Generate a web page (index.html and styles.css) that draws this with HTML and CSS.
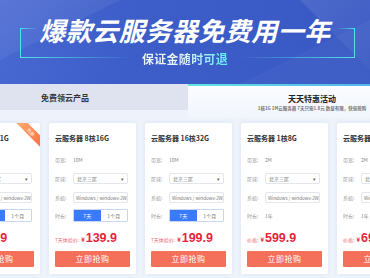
FILE: index.html
```html
<!DOCTYPE html>
<html lang="zh-CN">
<head>
<meta charset="utf-8">
<title>爆款云服务器免费用一年</title>
<link rel="stylesheet" href="styles.css">
</head>
<body>
<header class="banner">
  <svg class="deco" width="370" height="84" viewBox="0 0 370 84" aria-hidden="true">
    <defs>
      <linearGradient id="lf" x1="0" x2="1" y1="0" y2="0">
        <stop offset="0" stop-color="#4fe3ea"/>
        <stop offset="1" stop-color="#4fe3ea" stop-opacity="0"/>
      </linearGradient>
      <linearGradient id="rf" x1="1" x2="0" y1="0" y2="0">
        <stop offset="0" stop-color="#4fe3ea"/>
        <stop offset="1" stop-color="#4fe3ea" stop-opacity="0"/>
      </linearGradient>
      <linearGradient id="sh" x1="0" x2="1" y1="0" y2="1">
        <stop offset="0" stop-color="#ffffff" stop-opacity="0.10"/>
        <stop offset="1" stop-color="#ffffff" stop-opacity="0.02"/>
      </linearGradient>
    </defs>
    <polygon points="0,0 120,0 0,60" fill="url(#sh)"/>
    <polygon points="300,0 370,0 370,70" fill="url(#sh)"/>
    <polygon points="240,84 370,20 370,84" fill="#ffffff" fill-opacity="0.04"/>
    <rect x="20" y="28" width="18" height="1" fill="url(#lf)"/>
    <rect x="20" y="28" width="1" height="30" fill="#4fe3ea"/>
    <rect x="20" y="57" width="114" height="1" fill="url(#lf)"/>
    <rect x="337" y="28" width="18" height="1" fill="url(#rf)"/>
    <rect x="354" y="28" width="1" height="30" fill="#4fe3ea"/>
    <rect x="240" y="57" width="115" height="1" fill="url(#rf)"/>
  </svg>
  <h1 class="title">爆款云服务器免费用一年</h1>
  <p class="sub">保证金随时可退</p>
</header>

<main class="wrap">
  <nav class="tabs">
    <div class="tab">免费领云产品</div>
    <div class="tab active">
      <div class="tab-title">天天特惠活动</div>
      <div class="tab-note">1核1G 1M云服务器 7天只需1.8元 数量有限，快需抢购</div>
    </div>
  </nav>

  <section class="cards">
    <article class="card">
      <span class="ribbon">热卖</span>
      <h2 class="card-title">云服务器 1核1G</h2>
      <div class="row first"><span class="lbl">带宽:</span><span class="val">1M</span></div>
      <div class="row"><span class="lbl">区域:</span><span class="box sel">北京三区<i class="arr">▾</i></span></div>
      <div class="row sys"><span class="lbl">系统:</span><span class="box">Windows / windows-2W</span></div>
      <div class="row dur"><span class="lbl">时长:</span><span class="seg"><span class="on">7天</span><span>1个月</span></span></div>
      <div class="price"><span class="plbl">7天体验价:</span><span class="yen">¥</span><span class="amt">1.9</span></div>
      <button class="buy">立即抢购</button>
    </article>

    <article class="card">
      <h2 class="card-title">云服务器 8核16G</h2>
      <div class="row first"><span class="lbl">带宽:</span><span class="val">10M</span></div>
      <div class="row"><span class="lbl">区域:</span><span class="box sel">北京三区<i class="arr">▾</i></span></div>
      <div class="row sys"><span class="lbl">系统:</span><span class="box">Windows / windows-2W</span></div>
      <div class="row dur"><span class="lbl">时长:</span><span class="seg"><span class="on">7天</span><span>1个月</span></span></div>
      <div class="price"><span class="plbl">7天体验价:</span><span class="yen">¥</span><span class="amt">139.9</span></div>
      <button class="buy">立即抢购</button>
    </article>

    <article class="card">
      <h2 class="card-title">云服务器 16核32G</h2>
      <div class="row first"><span class="lbl">带宽:</span><span class="val">10M</span></div>
      <div class="row"><span class="lbl">区域:</span><span class="box sel">北京三区<i class="arr">▾</i></span></div>
      <div class="row sys"><span class="lbl">系统:</span><span class="box">Windows / windows-2W</span></div>
      <div class="row dur"><span class="lbl">时长:</span><span class="seg"><span class="on">7天</span><span>1个月</span></span></div>
      <div class="price"><span class="plbl">7天体验价:</span><span class="yen">¥</span><span class="amt">199.9</span></div>
      <button class="buy">立即抢购</button>
    </article>

    <article class="card">
      <h2 class="card-title">云服务器 1核8G</h2>
      <div class="row first"><span class="lbl">带宽:</span><span class="val">2M</span></div>
      <div class="row"><span class="lbl">区域:</span><span class="box sel">北京三区<i class="arr">▾</i></span></div>
      <div class="row sys"><span class="lbl">系统:</span><span class="box">Windows / windows-2W</span></div>
      <div class="row dur"><span class="lbl">时长:</span><span class="val">1年</span></div>
      <div class="price"><span class="plbl">价格:</span><span class="yen">¥</span><span class="amt">599.9</span></div>
      <button class="buy">立即抢购</button>
    </article>

    <article class="card">
      <h2 class="card-title">云服务器 2核8G</h2>
      <div class="row first"><span class="lbl">带宽:</span><span class="val">2M</span></div>
      <div class="row"><span class="lbl">区域:</span><span class="box sel">北京三区<i class="arr">▾</i></span></div>
      <div class="row sys"><span class="lbl">系统:</span><span class="box">Windows / windows-2W</span></div>
      <div class="row dur"><span class="lbl">时长:</span><span class="val">1年</span></div>
      <div class="price"><span class="plbl">价格:</span><span class="yen">¥</span><span class="amt">699.9</span></div>
      <button class="buy">立即抢购</button>
    </article>
  </section>
</main>
</body>
</html>
```

FILE: styles.css
```css
* { box-sizing: border-box; }

html, body {
  margin: 0;
  padding: 0;
}

body {
  width: 370px;
  height: 278px;
  overflow: hidden;
  background: #eef3fb;
  font-family: "Noto Sans CJK SC", "Noto Sans", sans-serif;
  color: #333;
}

/* ---------- banner ---------- */
.banner {
  position: relative;
  height: 84px;
  padding-top: 15px;
  background: linear-gradient(100deg, #4868d2 0%, #3d5dc8 35%, #3858c3 100%);
  text-align: center;
  overflow: hidden;
}

.deco {
  position: absolute;
  left: 0;
  top: 0;
}

.title {
  position: relative;
  margin: 0;
  font-size: 26px;
  line-height: 30px;
  font-weight: 700;
  font-style: italic;
  color: #fff;
  letter-spacing: 0.5px;
}

.sub {
  position: relative;
  margin: 6px 0 0;
  display: inline-block;
  font-size: 12px;
  line-height: 14px;
  font-weight: 700;
  letter-spacing: 0.3px;
  background: linear-gradient(90deg, #e9f4ff 0%, #e9f4ff 45%, #56eef0 100%);
  -webkit-background-clip: text;
  background-clip: text;
  color: transparent;
}

/* ---------- tabs ---------- */
.wrap {
  margin-left: -58px;
  width: 494px;
}

.tabs {
  display: grid;
  grid-template-columns: 246px 248px;
  align-items: start;
  height: 34px;
}

.tab {
  height: 26px;
  background: #dfe3ef;
  display: flex;
  align-items: center;
  justify-content: center;
  font-size: 8px;
  font-weight: 700;
  color: #333;
}

.tab.active {
  height: 34px;
  flex-direction: column;
  justify-content: flex-start;
  padding-top: 8px;
  background: linear-gradient(180deg, #fafcff 0%, #f1f5fc 100%);
  border-top: 2px solid #5fe1e4;
  border-image: linear-gradient(90deg, #62e6e2, #4fa3f0) 1;
  border-left: 0;
  border-right: 0;
  border-bottom: 0;
}

.tab-title {
  font-size: 8px;
  line-height: 10px;
  font-weight: 700;
  color: #222;
}

.tab-note {
  margin-top: 1px;
  font-size: 4.5px;
  line-height: 6px;
  color: #777;
  white-space: nowrap;
}

/* ---------- cards ---------- */
.cards {
  display: flex;
  gap: 9px;
  padding-left: 11px;
  margin-top: 5px;
}

.card {
  position: relative;
  flex: 0 0 87px;
  width: 87px;
  height: 151px;
  padding: 10px 6px 7px;
  background: #fff;
  border-radius: 2px;
  box-shadow: 0 0 4px rgba(70, 110, 200, 0.1);
  overflow: hidden;
  display: flex;
  flex-direction: column;
}

.ribbon {
  position: absolute;
  top: 5px;
  right: -11px;
  width: 40px;
  height: 8px;
  transform: rotate(45deg);
  background: linear-gradient(90deg, #ffb074, #ff6b3b);
  color: #fff;
  font-size: 4.5px;
  line-height: 8px;
  text-align: center;
}

.card-title {
  margin: 0;
  font-size: 7px;
  line-height: 10px;
  font-weight: 700;
  color: #333;
  white-space: nowrap;
}

.row {
  display: flex;
  align-items: center;
  height: 11px;
  margin-top: 8px;
  font-size: 5px;
  color: #666;
  white-space: nowrap;
}

.row.first { margin-top: 11px; }
.row.sys { margin-top: 8px; }
.row.dur { height: 13px; margin-top: 6px; }

.lbl {
  flex: 0 0 18px;
  color: #999;
}

.val { color: #888; }

.box {
  position: relative;
  width: 55px;
  height: 11px;
  border: 1px solid #e2e5ec;
  border-radius: 2px;
  padding-left: 2px;
  display: flex;
  align-items: center;
  color: #777;
  font-size: 4.6px;
  overflow: hidden;
}

.box.sel { font-size: 5px; padding-left: 3px; }

.arr {
  position: absolute;
  right: 3px;
  top: 0;
  font-style: normal;
  font-size: 5px;
  line-height: 9px;
  color: #666;
}

.seg {
  width: 55px;
  height: 13px;
  display: flex;
  border: 1px solid #c7d6f3;
  border-radius: 1px;
  overflow: hidden;
}

.seg span {
  flex: 1;
  display: flex;
  align-items: center;
  justify-content: center;
  color: #777;
  background: #fff;
}

.seg span.on {
  background: #3a7bfd;
  color: #fff;
}

.price {
  display: flex;
  align-items: baseline;
  height: 16px;
  margin-top: 8px;
  line-height: 16px;
  white-space: nowrap;
}

.plbl {
  font-size: 5px;
  color: #f06a74;
  margin-right: 2px;
}

.yen {
  font-size: 6px;
  font-weight: 700;
  color: #e8243c;
  margin-right: 1px;
}

.amt {
  font-family: "Liberation Sans", Arial, sans-serif;
  font-size: 12.5px;
  font-weight: 700;
  color: #e8243c;
}

.buy {
  margin-top: 5px;
  height: 16px;
  width: 100%;
  border: 0;
  border-radius: 1px;
  background: #f5705b;
  color: #fff;
  font-family: "Noto Sans CJK SC", sans-serif;
  font-size: 8px;
  line-height: 16px;
  padding: 0;
  letter-spacing: 0.5px;
}
```
